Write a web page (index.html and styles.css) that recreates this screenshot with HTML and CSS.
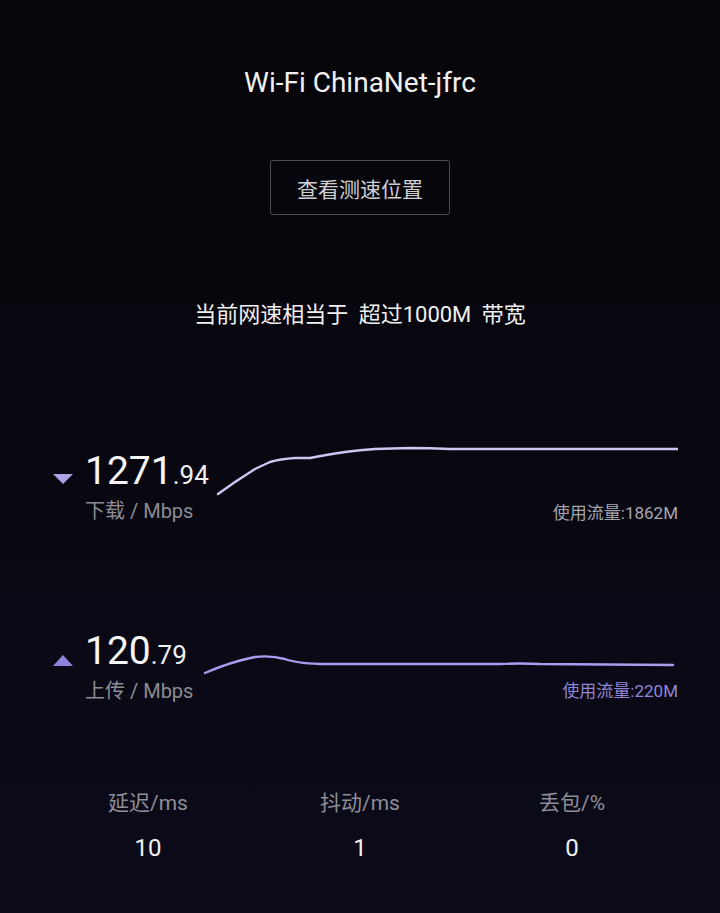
FILE: index.html
```html
<!DOCTYPE html>
<html lang="zh">
<head>
<meta charset="utf-8">
<link rel="stylesheet" href="styles.css">
</head>
<body>
<div class="page">
  <h1 class="title">Wi-Fi ChinaNet-jfrc</h1>
  <div class="btn-wrap"><div class="btn">查看测速位置</div></div>
  <p class="summary">当前网速相当于 <span class="hl">超过1000M</span> 带宽</p>

  <div class="row row-down">
    <div class="info">
      <div class="val"><span class="tri tri-down"></span><span class="big">1271</span><span class="small">.94</span></div>
      <div class="unit">下载 / Mbps</div>
    </div>
    <div class="chart">
      <svg class="line" width="478" height="60" viewBox="0 0 478 60">
        <path d="M18 52 L35 40 L55 27 L70 20 Q80 17 95 16 L110 16 Q125 13 145 10 Q160 8 175 7 L210 6 Q230 6 250 7 L478 7" fill="none" stroke="#cdc6f2" stroke-width="2.4" stroke-linecap="round" stroke-linejoin="round"/>
      </svg>
      <div class="usage">使用流量:1862M</div>
    </div>
  </div>

  <div class="row row-up">
    <div class="info">
      <div class="val"><span class="tri tri-up"></span><span class="big">120</span><span class="small">.79</span></div>
      <div class="unit">上传 / Mbps</div>
    </div>
    <div class="chart">
      <svg class="line" width="478" height="40" viewBox="0 0 478 40">
        <path d="M5 27 Q30 16 55 11 Q70 9 85 13 Q95 17 120 18 L300 18 Q320 17 340 18 L473 19" fill="none" stroke="#a79ef0" stroke-width="2.4" stroke-linecap="round" stroke-linejoin="round"/>
      </svg>
      <div class="usage usage-up">使用流量:220M</div>
    </div>
  </div>

  <div class="stats">
    <div class="stat"><div class="s-label">延迟/ms</div><div class="s-val">10</div></div>
    <div class="stat"><div class="s-label">抖动/ms</div><div class="s-val">1</div></div>
    <div class="stat"><div class="s-label">丢包/%</div><div class="s-val">0</div></div>
  </div>
</div>
</body>
</html>
```
FILE: styles.css
```css
html, body {
  margin: 0;
  padding: 0;
}
body {
  width: 720px;
  height: 913px;
  overflow: hidden;
  background: linear-gradient(#060509 0%, #08070f 40%, #0c0b1b 100%);
  font-family: Roboto, "Noto Sans CJK SC", sans-serif;
  color: #f2f2f2;
}
.page {
  display: flex;
  flex-direction: column;
  padding-top: 64px;
}
.title {
  margin: 0;
  text-align: center;
  font-weight: 400;
  font-size: 28px;
  line-height: 38px;
  color: #f0f0f0;
}
.btn-wrap {
  display: flex;
  justify-content: center;
  margin-top: 58px;
}
.btn {
  width: 178px;
  height: 53px;
  border: 1px solid #4a4a52;
  border-radius: 3px;
  display: flex;
  align-items: center;
  justify-content: center;
  font-size: 21px;
  color: #cfcfd3;
}
.summary {
  margin: 85px 0 0;
  text-align: center;
  font-size: 22px;
  line-height: 30px;
  color: #f0f0f0;
}
.hl { margin-left: 5px; margin-right: 5px; }

.row {
  display: flex;
  padding-left: 52px;
}
.row-down { margin-top: 121px; }
.row-up { margin-top: 106px; }
.info {
  width: 148px;
  display: flex;
  flex-direction: column;
}
.val {
  display: flex;
  align-items: baseline;
  height: 40px;
  white-space: nowrap;
}
.tri {
  width: 0;
  height: 0;
  border-left: 10px solid transparent;
  border-right: 10px solid transparent;
  margin-left: 1px;
  margin-right: 12px;
}
.tri-down {
  border-top: 10px solid #aaa2e4;
}
.tri-up {
  border-bottom: 11px solid #8f84dc;
  position: relative;
  top: 2px;
}
.big {
  font-size: 39px;
  line-height: 40px;
  color: #f6f6f6;
}
.small {
  font-size: 26px;
  color: #f0f0f0;
}
.unit {
  margin-left: 33px;
  margin-top: 6px;
  font-size: 20px;
  line-height: 28px;
  color: #8c8c94;
  white-space: nowrap;
}
.chart {
  width: 478px;
  display: flex;
  flex-direction: column;
}
.line { display: block; }
.row-down .chart { margin-top: -9px; }
.row-up .chart { margin-top: 15px; }
.usage {
  text-align: right;
  font-size: 17px;
  line-height: 22px;
  color: #a6a6ae;
}
.row-down .usage { margin-top: 0px; }
.row-up .usage { margin-top: -6px; }
.usage-up { color: #8f86d6; }

.stats {
  display: grid;
  grid-template-columns: 1fr 1fr 1fr;
  padding: 0 42px;
  margin-top: 84px;
}
.stat {
  display: flex;
  flex-direction: column;
  align-items: center;
}
.s-label {
  font-size: 21px;
  line-height: 28px;
  color: #8e8e96;
}
.s-val {
  margin-top: 16px;
  font-size: 24px;
  line-height: 30px;
  color: #f2f2f2;
}
```
